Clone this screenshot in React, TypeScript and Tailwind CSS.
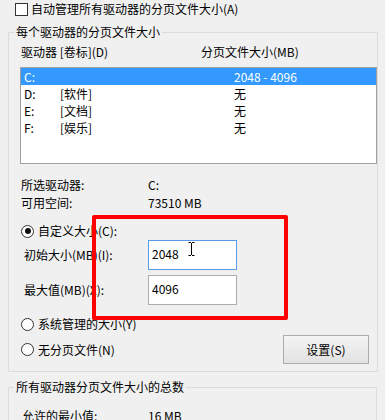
const drives = [
  { letter: 'C:', label: '', size: '2048 - 4096', selected: true },
  { letter: 'D:', label: '[软件]', size: '无', selected: false },
  { letter: 'E:', label: '[文档]', size: '无', selected: false },
  { letter: 'F:', label: '[娱乐]', size: '无', selected: false },
];

function Radio({ checked, label }: { checked?: boolean; label: string }) {
  return (
    <label className="flex items-center h-4 leading-4">
      <span className="w-[13px] h-[13px] rounded-full border border-[#333] bg-white flex items-center justify-center">
        {checked && <span className="w-[6px] h-[6px] rounded-full bg-[#111]" />}
      </span>
      <span className="ml-[4px]">{label}</span>
    </label>
  );
}

function SizeInput({ value, focused }: { value: string; focused?: boolean }) {
  return (
    <div
      className={`w-[89px] h-[30px] bg-white border pl-[3px] pb-[3px] flex items-center ${
        focused ? 'border-[#569de5]' : 'border-[#adadad]'
      }`}
    >
      {value}
    </div>
  );
}

export default function App() {
  return (
    <div className="relative w-[385px] h-[420px] overflow-hidden bg-[#f0f0f0] text-[12px] leading-4 text-black font-['Noto_Sans_CJK_SC','Microsoft_YaHei',sans-serif]">
      {/* top checkbox */}
      <div className="flex items-center h-4 mt-px pl-[15px]">
        <span className="w-[13px] h-[13px] border border-[#333] bg-white" />
        <span className="ml-[3px]">自动管理所有驱动器的分页文件大小(A)</span>
      </div>

      {/* per-drive group */}
      <fieldset className="mt-[7px] ml-[8px] w-[369px] border border-[#dcdcdc]">
        <legend className="ml-[5px] px-[2px] leading-4">每个驱动器的分页文件大小</legend>

        <div className="flex mt-[4px] pl-[12px]">
          <span className="w-[180px]">驱动器 [卷标](D)</span>
          <span>分页文件大小(MB)</span>
        </div>

        <div className="mt-[7px] ml-[11px] w-[357px] h-[97px] bg-white border border-[#a0a0a0]">
          {drives.map((d) => (
            <div
              key={d.letter}
              className={`flex items-center h-[17px] pl-[3px] ${d.selected ? 'bg-[#3399ff] text-white' : ''}`}
            >
              <span className="w-[36px]">{d.letter}</span>
              <span className="w-[174px]">{d.label}</span>
              <span>{d.size}</span>
            </div>
          ))}
        </div>

        <div className="grid grid-cols-[127px_1fr] auto-rows-[18px] items-center mt-[12px] pl-[12px]">
          <span>所选驱动器:</span>
          <span>C:</span>
          <span>可用空间:</span>
          <span>73510 MB</span>
        </div>

        <div className="mt-[11px] pl-[12px]">
          <Radio checked label="自定义大小(C):" />
        </div>

        <div className="mt-px pl-[15px] flex flex-col gap-[5px]">
          <div className="flex items-center">
            <span className="w-[124px]">初始大小(MB)(I):</span>
            <SizeInput value="2048" focused />
          </div>
          <div className="flex items-center">
            <span className="w-[124px]">最大值(MB)(X):</span>
            <SizeInput value="4096" />
          </div>
        </div>

        <div className="mt-[11px] pl-[12px]">
          <Radio label="系统管理的大小(Y)" />
        </div>

        <div className="mt-[3px] pl-[12px] pr-[8px] pb-[7px] flex items-center justify-between">
          <Radio label="无分页文件(N)" />
          <button className="w-[86px] h-[29px] border border-[#adadad] bg-gradient-to-b from-[#f4f4f4] to-[#e2e2e2] flex items-center justify-center">
            设置(S)
          </button>
        </div>
      </fieldset>

      {/* totals group */}
      <fieldset className="mt-[7px] ml-[8px] w-[369px] h-[80px] border border-[#dcdcdc]">
        <legend className="ml-[5px] px-[2px] leading-4">所有驱动器分页文件大小的总数</legend>
        <div className="grid grid-cols-[126px_1fr] mt-[13px] pl-[13px]">
          <span>允许的最小值:</span>
          <span>16 MB</span>
        </div>
      </fieldset>

      {/* text cursor over the first input */}
      <svg className="absolute left-[188px] top-[242px]" width="7" height="14" viewBox="0 0 7 14">
        <path d="M0.5 0.5h2.5M4 0.5h2.5M3.5 1v12M0.5 13.5h2.5M4 13.5h2.5" stroke="#000" strokeWidth="1" fill="none" />
      </svg>

      {/* red annotation box */}
      <div className="absolute left-[92px] top-[215px] w-[196px] h-[105px] border-[4px] border-[#ff0000] rounded-[2px]" />
    </div>
  );
}
